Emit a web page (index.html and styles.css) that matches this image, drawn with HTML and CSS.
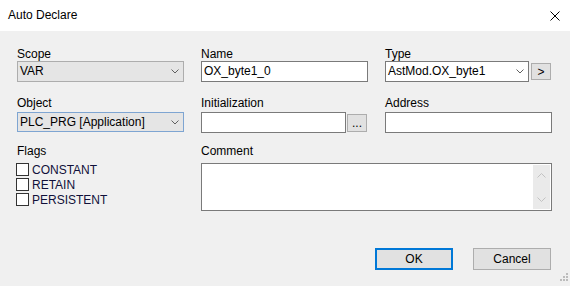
FILE: index.html
```html
<!DOCTYPE html>
<html lang="en">
<head>
    <meta charset="UTF-8">
    <title>Auto Declare</title>
    <link rel="stylesheet" href="styles.css">
</head>
<body>
    <div class="dialog">
        <!-- Title bar -->
        <div class="titlebar">
            <span class="title">Auto Declare</span>
            <svg class="close" width="10" height="10" viewBox="0 0 10 10">
                <path d="M0.5 0.5 L9.5 9.5 M9.5 0.5 L0.5 9.5" stroke="#000" stroke-width="1" fill="none"/>
            </svg>
        </div>

        <div class="content">
            <!-- Row 1 -->
            <div class="row row-first">
                <div class="field">
                    <label>Scope</label>
                    <div class="combo combo-grey">
                        <span>VAR</span>
                        <svg class="chevron" width="8" height="5" viewBox="0 0 8 5"><path d="M0.5 0.5 L4 4 L7.5 0.5" stroke="#606060" fill="none"/></svg>
                    </div>
                </div>
                <div class="field">
                    <label>Name</label>
                    <div class="edit">OX_byte1_0</div>
                </div>
                <div class="field">
                    <label>Type</label>
                    <div class="inline">
                        <div class="combo combo-white type-combo">
                            <span>AstMod.OX_byte1</span>
                            <svg class="chevron" width="8" height="5" viewBox="0 0 8 5"><path d="M0.5 0.5 L4 4 L7.5 0.5" stroke="#606060" fill="none"/></svg>
                        </div>
                        <button class="small-btn type-btn">&gt;</button>
                    </div>
                </div>
            </div>

            <!-- Row 2 -->
            <div class="row row-second">
                <div class="field">
                    <label>Object</label>
                    <div class="combo combo-grey combo-focus">
                        <span>PLC_PRG [Application]</span>
                        <svg class="chevron" width="8" height="5" viewBox="0 0 8 5"><path d="M0.5 0.5 L4 4 L7.5 0.5" stroke="#606060" fill="none"/></svg>
                    </div>
                </div>
                <div class="field">
                    <label>Initialization</label>
                    <div class="inline">
                        <div class="edit init-edit"></div>
                        <button class="small-btn dots-btn">...</button>
                    </div>
                </div>
                <div class="field">
                    <label>Address</label>
                    <div class="edit"></div>
                </div>
            </div>

            <!-- Row 3 -->
            <div class="row row-third">
                <div class="field">
                    <label>Flags</label>
                    <div class="checks">
                        <div class="check"><span class="box"></span>CONSTANT</div>
                        <div class="check"><span class="box"></span>RETAIN</div>
                        <div class="check"><span class="box"></span>PERSISTENT</div>
                    </div>
                </div>
                <div class="field comment">
                    <label>Comment</label>
                    <div class="memo">
                        <div class="scrollbar">
                            <svg width="9" height="5" viewBox="0 0 9 5"><path d="M0.5 4.5 L4.5 0.5 L8.5 4.5" stroke="#c2c2c2" fill="none"/></svg>
                            <svg width="9" height="5" viewBox="0 0 9 5"><path d="M0.5 0.5 L4.5 4.5 L8.5 0.5" stroke="#c2c2c2" fill="none"/></svg>
                        </div>
                    </div>
                </div>
            </div>

            <!-- Buttons -->
            <div class="buttons">
                <button class="btn btn-default">OK</button>
                <button class="btn">Cancel</button>
            </div>
        </div>

        <svg class="grip" width="12" height="12" viewBox="0 0 12 12">
            <rect x="9" y="0" width="2" height="2" fill="#bcbcbc"/>
            <rect x="6" y="3" width="2" height="2" fill="#bcbcbc"/>
            <rect x="9" y="3" width="2" height="2" fill="#bcbcbc"/>
            <rect x="3" y="6" width="2" height="2" fill="#bcbcbc"/>
            <rect x="6" y="6" width="2" height="2" fill="#bcbcbc"/>
            <rect x="9" y="6" width="2" height="2" fill="#bcbcbc"/>
        </svg>
    </div>
</body>
</html>
```

FILE: styles.css
```css
body {
    margin: 0;
    font-family: "Liberation Sans", Arial, sans-serif;
    font-size: 12px;
    color: #000;
    background-color: #f0f0f0;
}

.dialog {
    position: relative;
    width: 570px;
    height: 286px;
    background-color: #f0f0f0;
}

.titlebar {
    height: 31px;
    background-color: #fff;
    display: flex;
    align-items: center;
    justify-content: space-between;
    padding: 0 10px 0 8px;
}

.title {
    margin-top: -1px;
}

.close {
    display: block;
}

.content {
    padding: 17px 18px 0 17px;
}

.row {
    display: grid;
    grid-template-columns: 167px 167px 167px;
    column-gap: 17px;
}

.field {
    display: flex;
    flex-direction: column;
}

.field label {
    display: block;
    height: 13px;
    line-height: 13px;
}

.row-second {
    margin-top: 15px;
}

.row-second label {
    height: 15px;
}

.row-third {
    margin-top: 12px;
}

.row-third label {
    height: 18px;
}

.edit,
.combo {
    box-sizing: border-box;
    height: 21px;
    border: 1px solid #7a7a7a;
    background-color: #fff;
    line-height: 19px;
    padding-left: 2px;
    white-space: nowrap;
}

.combo {
    display: flex;
    align-items: center;
    justify-content: space-between;
    padding-right: 4px;
}

.combo-grey {
    background-color: #e5e5e5;
    border-color: #adadad;
}

.combo-focus {
    border-color: #7ea5d2;
    height: 20px;
}

.chevron {
    display: block;
}

.inline {
    display: flex;
    align-items: center;
}

.type-combo {
    width: 144px;
}

.init-edit {
    width: 145px;
}

.small-btn {
    box-sizing: border-box;
    margin: 0;
    padding: 0;
    border: 1px solid #adadad;
    background-color: #e1e1e1;
    font-family: inherit;
    font-size: 12px;
    color: #000;
    width: 20px;
}

.type-btn {
    height: 17px;
    margin-left: 2px;
    line-height: 14px;
}

.dots-btn {
    height: 18px;
    margin-left: 1px;
    line-height: 12px;
}

.checks {
    margin-top: -1px;
    margin-left: -1px;
}

.check {
    display: flex;
    align-items: center;
    height: 15px;
    color: #10103a;
}

.box {
    box-sizing: border-box;
    width: 13px;
    height: 13px;
    border: 1px solid #333;
    background-color: #fff;
    margin-right: 3px;
}

.comment {
    grid-column: span 2;
}

.memo {
    box-sizing: border-box;
    height: 48px;
    border: 1px solid #7a7a7a;
    background-color: #fff;
    display: flex;
    justify-content: flex-end;
}

.scrollbar {
    width: 17px;
    background-color: #eaeaea;
    display: flex;
    flex-direction: column;
    align-items: center;
    justify-content: space-between;
    padding: 8px 0 7px;
    margin: 1px 1px 1px 0;
}

.scrollbar svg {
    display: block;
}

.buttons {
    display: flex;
    justify-content: flex-end;
    gap: 20px;
    margin-top: 37px;
    margin-right: 1px;
}

.btn {
    box-sizing: border-box;
    width: 78px;
    height: 22px;
    margin: 0;
    padding: 0;
    border: 1px solid #adadad;
    background-color: #e1e1e1;
    font-family: inherit;
    font-size: 12px;
    color: #000;
}

.btn-default {
    border: 2px solid #0078d7;
}

.grip {
    position: absolute;
    right: 1px;
    bottom: 1px;
}
```
